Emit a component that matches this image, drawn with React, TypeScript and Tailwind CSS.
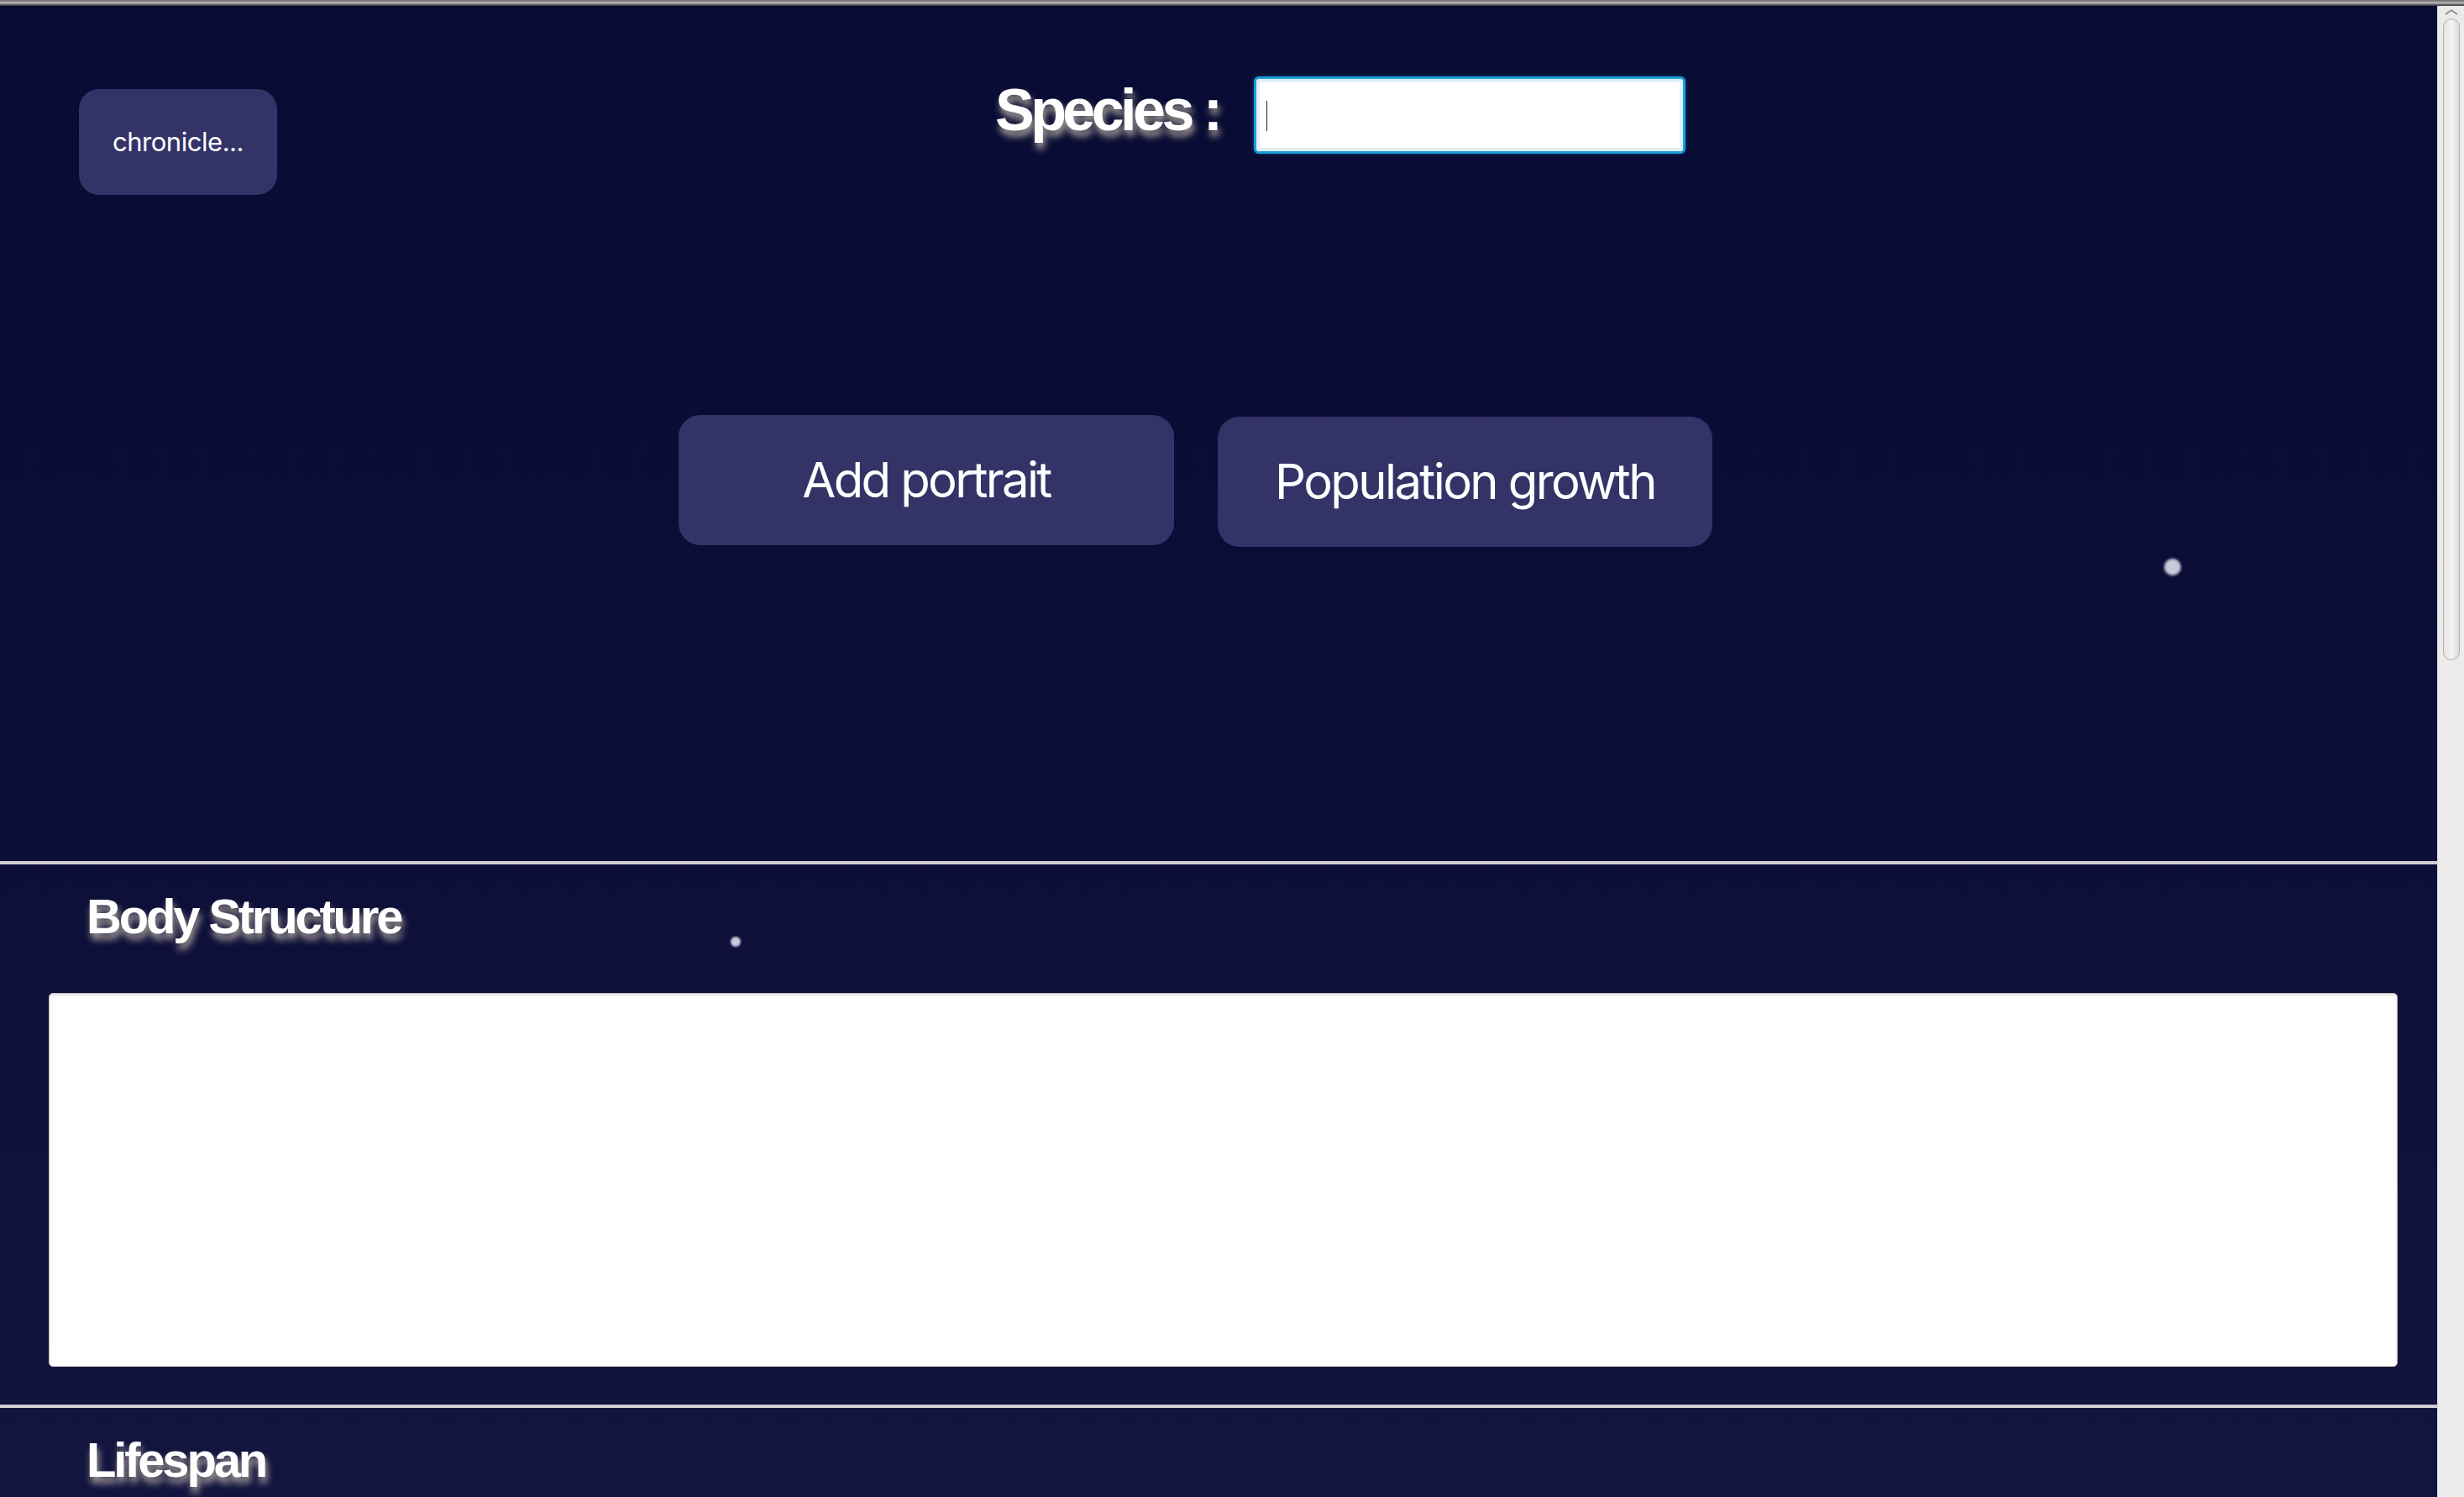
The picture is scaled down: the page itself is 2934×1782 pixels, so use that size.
import React from "react";

const headingStyle =
  "font-['Liberation_Sans',Arial,sans-serif] font-bold text-white leading-none [text-shadow:2px_7px_8px_rgba(245,230,200,0.7)]";
const buttonStyle =
  "bg-[#343368] text-white font-['Inter',sans-serif] flex items-center justify-center";

const Section: React.FC<{ title: string; children?: React.ReactNode }> = ({ title, children }) => (
  <section>
    <div className="h-[4px] bg-[#cfcfd5]" />
    <h2 className={`${headingStyle} text-[58px] tracking-[-0.055em] pl-[103px] pt-[33px]`}>{title}</h2>
    {children}
  </section>
);

const App: React.FC = () => {
  return (
    <div className="w-full h-screen overflow-hidden flex flex-col bg-[#2b2b24]">
      {/* window edge */}
      <div className="h-[7px] shrink-0 bg-gradient-to-b from-[#6a6a6a] via-[#b4b4b4] to-[#2e2e2e]" />

      <div className="flex flex-1 min-h-0">
        <main className="relative flex-1 overflow-hidden bg-gradient-to-b from-[#080b33] via-[#0c0e37] to-[#13153f]">
          {/* header */}
          <div className="h-[1018px]">
            <div className="flex items-start h-[225px]">
              <button className={`${buttonStyle} ml-[94px] mt-[99px] w-[236px] h-[126px] rounded-[24px] text-[31px] tracking-[-0.015em]`}>
                chronicle...
              </button>
              <label
                htmlFor="species"
                className={`${headingStyle} ml-[855px] mt-[89px] text-[70px] tracking-[-0.065em]`}
              >
                Species :
              </label>
              <div className="relative ml-[42px] mt-[84px]">
                <input
                  id="species"
                  type="text"
                  className="w-[514px] h-[92px] bg-white rounded-[6px] border-[3px] border-[#1b9ed8] shadow-[inset_0_0_0_4px_#e0f0fa,0_0_4px_rgba(27,158,216,0.4)] outline-none px-[12px] text-[30px]"
                />
                <span className="pointer-events-none absolute left-[15px] top-[29px] w-[1px] h-[36px] bg-[#222]" />
              </div>
            </div>

            <div className="flex items-start gap-[52px] ml-[808px] mt-[262px]">
              <button className={`${buttonStyle} w-[590px] h-[155px] rounded-[26px] text-[58px] tracking-[-0.045em]`}>
                Add portrait
              </button>
              <button className={`${buttonStyle} mt-[2px] w-[589px] h-[155px] rounded-[26px] text-[58px] tracking-[-0.045em]`}>
                Population growth
              </button>
            </div>
          </div>

          <Section title="Body Structure">
            <div className="ml-[58px] mr-[47px] mt-[62px] mb-[45px]">
              <textarea className="block w-full h-[445px] resize-none bg-white rounded-[5px] border border-[#c4c4c4] shadow-[inset_0_2px_3px_rgba(0,0,0,0.12)] outline-none" />
            </div>
          </Section>

          <Section title="Lifespan" />

          {/* stars */}
          <span className="absolute left-[2577px] top-[658px] w-[20px] h-[20px] rounded-full bg-[#c9c9d9] blur-[1.5px]" />
          <span className="absolute left-[870px] top-[1108px] w-[12px] h-[12px] rounded-full bg-[#c9c9d9] blur-[1px]" />
        </main>

        {/* scrollbar */}
        <aside className="w-[32px] shrink-0 bg-[#ebebeb] border-l border-[#d6d6d6] flex flex-col items-center">
          <svg width="18" height="10" viewBox="0 0 18 10" className="mt-[2px]">
            <path d="M2 8 L9 3 L16 8" fill="none" stroke="#8a8a8a" strokeWidth="1.6" />
          </svg>
          <div className="mt-[3px] w-[20px] h-[764px] rounded-full border border-[#b0b0b0] bg-gradient-to-r from-[#e4e4e4] via-[#f2f2f2] to-[#dcdcdc]" />
        </aside>
      </div>
    </div>
  );
};

export default App;
